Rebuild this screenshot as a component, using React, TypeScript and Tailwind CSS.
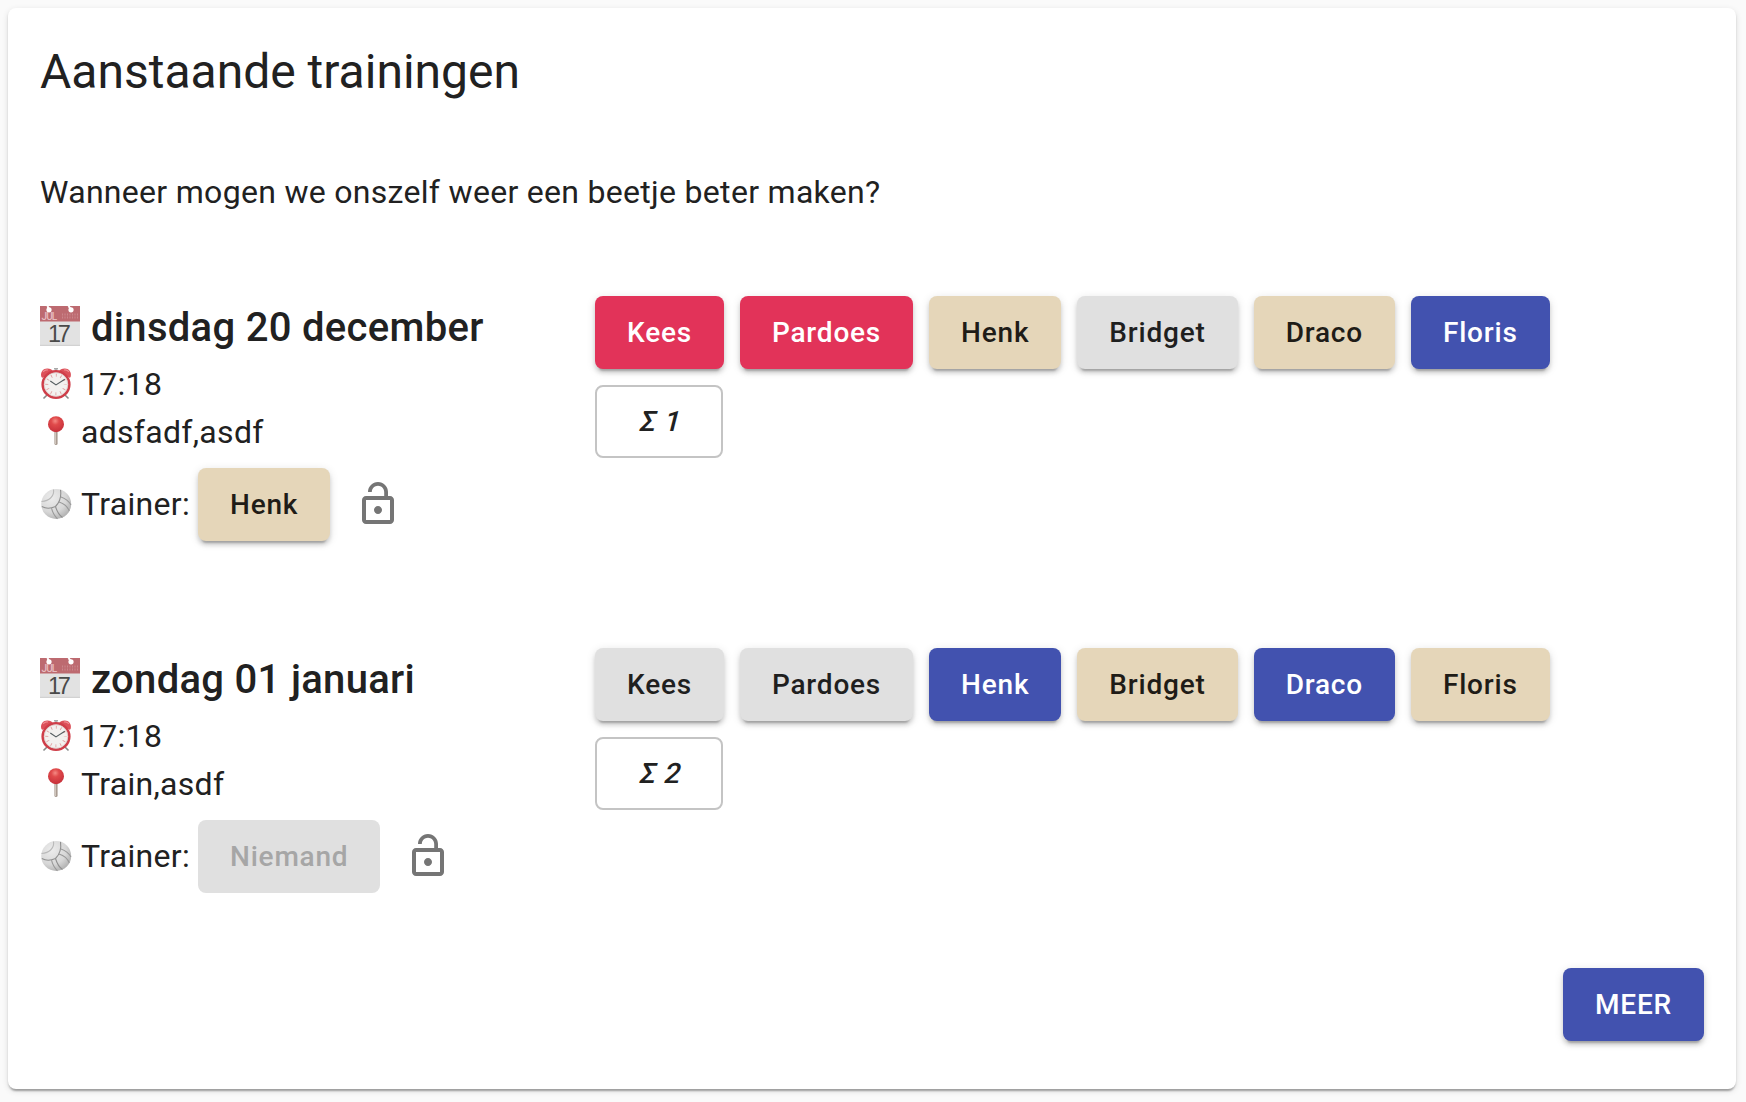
import React from "react";

type Tone = "red" | "sand" | "grey" | "blue" | "disabled" | "sum";

const tones: Record<Tone, string> = {
  red: "bg-[#e23359] text-white",
  sand: "bg-[#e5d6b9] text-[#1f1c17]",
  grey: "bg-[#e0e0e0] text-[#1f1f1f]",
  blue: "bg-[#4252af] text-white",
  disabled: "bg-[#e0e0e0] text-[#a6a6a6]",
  sum: "border-2 border-[#c4c4c4] bg-white text-[#212121]",
};

const raised =
  "shadow-[0_6px_2px_-4px_rgba(0,0,0,0.2),0_4px_4px_0_rgba(0,0,0,0.14),0_2px_10px_0_rgba(0,0,0,0.12)]";

function Button({ tone, children }: { tone: Tone; children: React.ReactNode }) {
  const flat = tone === "disabled" || tone === "sum";
  return (
    <button
      className={`flex h-[73px] min-w-32 shrink-0 items-center justify-center rounded-lg px-8 text-[28px] leading-[49px] font-medium tracking-[0.8px] whitespace-nowrap ${tones[tone]} ${flat ? "" : raised}`}
    >
      {children}
    </button>
  );
}

function CalendarIcon() {
  return (
    <svg viewBox="0 0 40 40" className="mb-1 size-10 shrink-0">
      <rect width="40" height="40" fill="#e2e2e2" />
      <rect width="40" height="15.5" fill="#bd6a70" />
      <rect y="38.8" width="40" height="1.2" fill="#d2d2d2" />
      <circle cx="9" cy="3.8" r="2.6" fill="#fff" />
      <circle cx="31" cy="3.8" r="2.6" fill="#fff" />
      <path d="M9 3.5 7.5 0M31 3.5 28.5 0" stroke="#fff" strokeWidth="2" />
      <text x="1.5" y="14.2" fontSize="10" fontFamily="Roboto" fill="#e6bcbf" textLength="16">JUL</text>
      <path d="M22 8.5h16M22 11.5h16" stroke="#cb868b" strokeWidth="2" strokeDasharray="1 1.5" />
      <text x="8" y="35.7" fontSize="23.5" fontFamily="Liberation Sans" fill="#4a4a4a" textLength="23">17</text>
    </svg>
  );
}

function ClockIcon() {
  return (
    <svg viewBox="0 0 32 32" className="mb-px size-8 shrink-0">
      <path d="m7 27-3.5 3.5M25 27l3.5 3.5" stroke="#888" strokeWidth="1.6" />
      <path d="M16 3V.5M14 .8h4" stroke="#a9a9a9" strokeWidth="1.4" />
      <path d="M1.2 8.3C.3 4 3.3.5 7.3.6c3 0 4.7 1.2 5.5 2.4L3 9.5c-.8.5-1.6 0-1.8-1.2Z" fill="#dc5059" />
      <path d="M30.8 8.3C31.7 4 28.7.5 24.7.6c-3 0-4.7 1.2-5.5 2.4L29 9.5c.8.5 1.6 0 1.8-1.2Z" fill="#dc5059" />
      <path d="M3 3.8Q5 1.5 8 2M29 3.8Q27 1.5 24 2" stroke="#ee8b90" strokeWidth="1.2" fill="none" />
      <circle cx="16" cy="16.5" r="13.3" fill="#f3f1ef" stroke="#cf3e49" strokeWidth="2.6" />
      <circle cx="16" cy="16.5" r="11.8" fill="none" stroke="#d8c8c6" strokeWidth=".7" />
      <circle cx="16" cy="16.5" r="9.2" fill="none" stroke="#df9a9c" strokeWidth="3" strokeDasharray=".8 4.017" strokeDashoffset=".4" />
      <path d="m10.3 12.9 5.7 4 8.8-5.6" fill="none" stroke="#555e60" strokeWidth="1.2" />
    </svg>
  );
}

function PinIcon() {
  return (
    <svg viewBox="0 0 32 32" className="mb-px size-8 shrink-0">
      <defs>
        <radialGradient id="pin" cx=".45" cy=".3" r=".7">
          <stop offset="0" stopColor="#f58a84" />
          <stop offset=".35" stopColor="#e04a4b" />
          <stop offset="1" stopColor="#c62f3a" />
        </radialGradient>
      </defs>
      <path d="M14.4 15h3.2v12.5q0 1.5-1.6 1.5t-1.6-1.5Z" fill="#a99c92" />
      <path d="M15.4 15v13" stroke="#d5cbc3" strokeWidth="1" />
      <circle cx="16" cy="8.2" r="8" fill="url(#pin)" />
    </svg>
  );
}

function BallIcon() {
  return (
    <svg viewBox="0 0 32 32" className="size-8 shrink-0">
      <defs>
        <radialGradient id="ball" cx=".35" cy=".3" r=".8">
          <stop offset="0" stopColor="#ececec" />
          <stop offset=".6" stopColor="#d7d7d7" />
          <stop offset="1" stopColor="#a9a9a9" />
        </radialGradient>
      </defs>
      <circle cx="16.2" cy="16" r="15" fill="url(#ball)" />
      <g fill="none" strokeWidth="1.1">
        <path d="M15.5 18.5C19.5 14.5 21.5 8.5 20.5 1.8M15.5 18.5C11 20.5 6 20.8 1.8 18.5M15.5 18.5C17 23.5 19.5 27.5 22.5 29.5" stroke="#8f8f8f" />
        <path d="M13.5 1.5C14.5 8 9.5 13 1.5 13.5" stroke="#b9b9b9" />
        <path d="M19 14C24 15.5 28 19.5 29.3 23M21 9C25.5 10.5 29 13.5 31 17M11.5 20.2C12.5 24.5 14.5 28 17.5 30.8" stroke="#999" />
      </g>
    </svg>
  );
}

function LockOpenIcon() {
  return (
    <svg viewBox="0 0 24 24" className="size-12 shrink-0" fill="#757575">
      <path d="M12 17c1.1 0 2-.9 2-2s-.9-2-2-2-2 .9-2 2 .9 2 2 2zm6-9h-1V6c0-2.76-2.24-5-5-5S7 3.24 7 6h1.9c0-1.71 1.39-3.1 3.1-3.1 1.71 0 3.1 1.39 3.1 3.1v2H6c-1.1 0-2 .9-2 2v10c0 1.1.9 2 2 2h12c1.1 0 2-.9 2-2V10c0-1.1-.9-2-2-2zm0 12H6V10h12v10z" />
    </svg>
  );
}

interface Training {
  date: string;
  time: string;
  place: string;
  trainer: string | null;
  players: [string, Tone][];
  total: number;
}

const trainings: Training[] = [
  {
    date: "dinsdag 20 december",
    time: "17:18",
    place: "adsfadf,asdf",
    trainer: "Henk",
    players: [["Kees", "red"], ["Pardoes", "red"], ["Henk", "sand"], ["Bridget", "grey"], ["Draco", "sand"], ["Floris", "blue"]],
    total: 1,
  },
  {
    date: "zondag 01 januari",
    time: "17:18",
    place: "Train,asdf",
    trainer: null,
    players: [["Kees", "grey"], ["Pardoes", "grey"], ["Henk", "blue"], ["Bridget", "sand"], ["Draco", "blue"], ["Floris", "sand"]],
    total: 2,
  },
];

function TrainingRow({ training }: { training: Training }) {
  return (
    <section className="flex h-[352px] items-start">
      <div className="w-[555px] shrink-0">
        <h2 className="flex h-16 items-center gap-[11px] text-[40px] leading-16 font-medium tracking-[0.3px]">
          <CalendarIcon />
          {training.date}
        </h2>
        <p className="flex h-12 items-center gap-[9px]">
          <ClockIcon />
          {training.time}
        </p>
        <p className="flex h-12 items-center gap-[9px]">
          <PinIcon />
          {training.place}
        </p>
        <div className="mt-3 flex h-[72px] items-center">
          <BallIcon />
          <span className="ml-[9px] w-[117px] shrink-0">Trainer:</span>
          <div className="h-[72px]">
            <Button tone={training.trainer ? "sand" : "disabled"}>{training.trainer ?? "Niemand"}</Button>
          </div>
          <span className="ml-6">
            <LockOpenIcon />
          </span>
        </div>
      </div>
      <div className="flex w-[1109px] flex-wrap gap-4">
        {training.players.map(([name, tone]) => (
          <Button key={name} tone={tone}>{name}</Button>
        ))}
        <div className="w-full">
          <Button tone="sum">
            <span className="origin-[50%_35px] -skew-x-[14deg]">Σ {training.total}</span>
          </Button>
        </div>
      </div>
    </section>
  );
}

export default function App() {
  return (
    <div className="h-[1102px] w-[1746px] bg-[#fafafa] pt-2 pl-2 font-['Roboto',sans-serif] text-[32px] leading-12 tracking-[0.3px] text-[#212121]">
      <main className="flex h-[1081px] w-[1728px] flex-col rounded-lg bg-white p-8 shadow-[0_4px_2px_-2px_rgba(0,0,0,0.2),0_2px_2px_0_rgba(0,0,0,0.14),0_2px_6px_0_rgba(0,0,0,0.12)]">
        <h1 className="h-16 text-[48px] leading-16 tracking-normal">Aanstaande trainingen</h1>
        <p className="mt-16 mb-20">Wanneer mogen we onszelf weer een beetje beter maken?</p>
        {trainings.map((t) => (
          <TrainingRow key={t.date} training={t} />
        ))}
        <div className="-mt-8 flex justify-end">
          <Button tone="blue">MEER</Button>
        </div>
      </main>
    </div>
  );
}
